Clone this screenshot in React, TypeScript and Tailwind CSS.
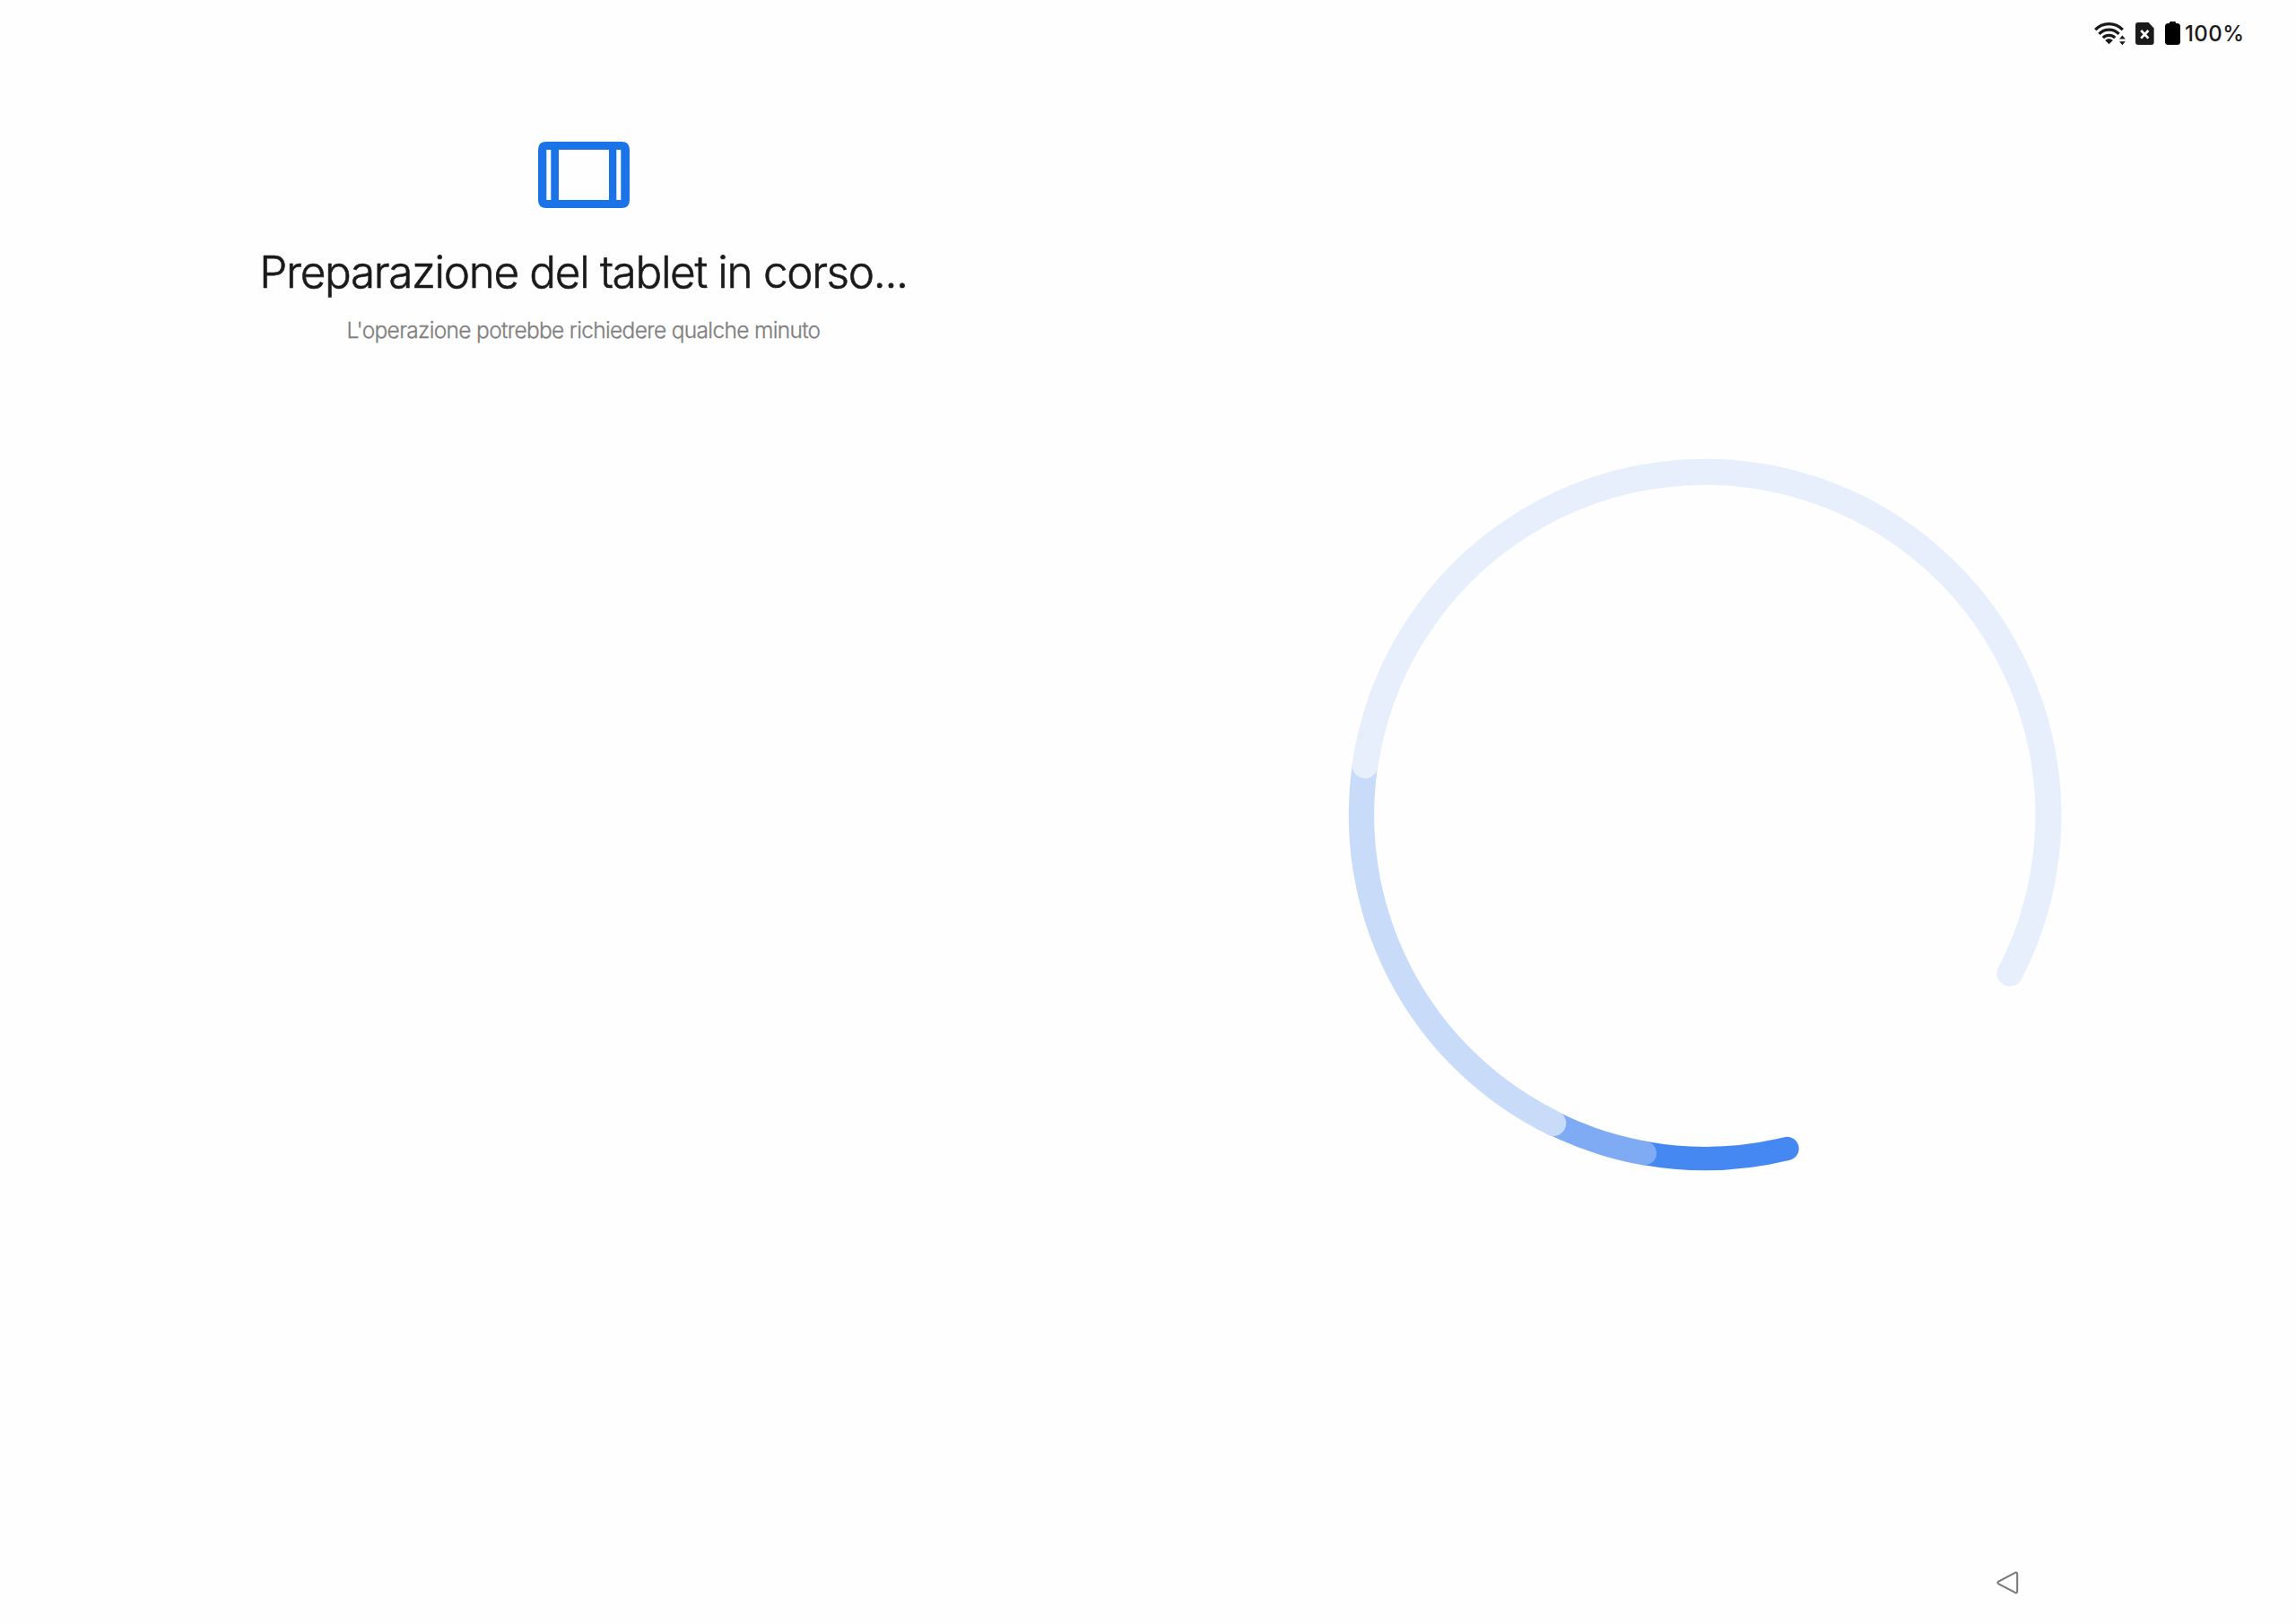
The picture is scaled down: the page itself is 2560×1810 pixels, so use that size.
function WifiIcon() {
  return (
    <svg width="37" height="28" viewBox="0 0 37 28" fill="none">
      <g stroke="#1a1a1a" strokeWidth="3.2">
        <path d="M1.2 10.2C9.5 1.3 23.5 1.3 31.8 10.2" />
        <path d="M5.4 14.8C11.5 8.5 21.5 8.5 27.6 14.8" />
        <path d="M9.8 19.2C13.5 15.4 19.5 15.4 23.2 19.2" />
      </g>
      <path d="M12.2 22C14.6 19.6 18.4 19.6 20.8 22L16.5 26.3Z" fill="#1a1a1a" />
      <path d="M28 20.6L31.4 16.6L34.8 20.6ZM28 23.2L31.4 27.2L34.8 23.2Z" fill="#1a1a1a" />
    </svg>
  );
}

function SimIcon() {
  return (
    <svg width="21" height="25" viewBox="0 0 21 25" fill="none">
      <path
        d="M3 0H14.6L20.6 6.4V22Q20.6 25 17.6 25H3Q0 25 0 22V3Q0 0 3 0Z"
        fill="#1a1a1a"
      />
      <path d="M6.2 9L14.4 17.6M14.4 9L6.2 17.6" stroke="#fefefe" strokeWidth="2.7" />
    </svg>
  );
}

function BatteryIcon() {
  return (
    <svg width="17" height="26" viewBox="0 0 17 26" fill="#000">
      <path d="M5 2V1.4Q5 0 6.4 0H10.6Q12 0 12 1.4V2H13.4Q17 2 17 5.5V22.5Q17 26 13.4 26H3.6Q0 26 0 22.5V5.5Q0 2 3.6 2Z" />
    </svg>
  );
}

function TabletIcon() {
  return (
    <svg width="102" height="74" viewBox="0 0 102 74">
      <path
        fillRule="evenodd"
        fill="#1b73e8"
        d="M9 0H93Q102 0 102 9V65Q102 74 93 74H9Q0 74 0 65V9Q0 0 9 0ZM9.3 9V65H14.3V9ZM23 9V65H79V9ZM87.3 9V65H92.3V9Z"
      />
    </svg>
  );
}

function Spinner() {
  return (
    <svg width="800" height="800" viewBox="1501.5 509 800 800" fill="none" strokeLinecap="round">
      <path d="M1993 1281A383 383 0 0 1 1834 1286" stroke="#4688f1" strokeWidth="26.4" />
      <path d="M1834 1286A383 383 0 0 1 1732.5 1252.7" stroke="#7eabf3" strokeWidth="27" />
      <path d="M1732.5 1252.7A383 383 0 0 1 1522.5 853.5" stroke="#c8dcfa" strokeWidth="28.4" />
      <path d="M1522.5 853.5A383 383 0 1 1 2241.5 1085.5" stroke="#e7effd" strokeWidth="29" />
    </svg>
  );
}

export default function App() {
  return (
    <div className="flex h-[1810px] w-[2560px] flex-col bg-[#fefefe] font-['Inter',sans-serif] text-[#1a1a1a]">
      <header className="flex h-[74px] items-center justify-end pr-[58px]">
        <WifiIcon />
        <div className="ml-[9px]">
          <SimIcon />
        </div>
        <div className="ml-[12px]">
          <BatteryIcon />
        </div>
        <span className="ml-[5px] w-[66px] whitespace-nowrap pt-[2px] text-[24px] font-medium leading-none tracking-[0.4px]">
          100%
        </span>
      </header>

      <main className="flex flex-1">
        <section className="flex w-[1301px] flex-col items-center pt-[84px]">
          <TabletIcon />
          <h1 className="mt-[41px] whitespace-nowrap text-[49.5px] font-light leading-[60px] tracking-[-1.36px] [-webkit-text-stroke:0.6px_#1a1a1a]">
            Preparazione del tablet in corso...
          </h1>
          <p className="mt-[20px] whitespace-nowrap text-[24.5px] font-light leading-[30px] tracking-[-0.67px] text-[#808080] [-webkit-text-stroke:0.3px_#808080]">
            L'operazione potrebbe richiedere qualche minuto
          </p>
        </section>
        <section className="flex flex-1 pl-[200px] pt-[435px]">
          <Spinner />
        </section>
      </main>

      <footer className="flex h-[90px] items-center justify-end pr-[308px]">
        <svg width="26" height="26" viewBox="0 0 26 26" fill="none">
          <path
            d="M2.4 11.7L21 1.8Q23.2 1 23.2 3.4V22.6Q23.2 25 21 24.2L2.4 14.3Q.4 13 2.4 11.7Z"
            stroke="#777"
            strokeWidth="2"
          />
        </svg>
      </footer>
    </div>
  );
}
